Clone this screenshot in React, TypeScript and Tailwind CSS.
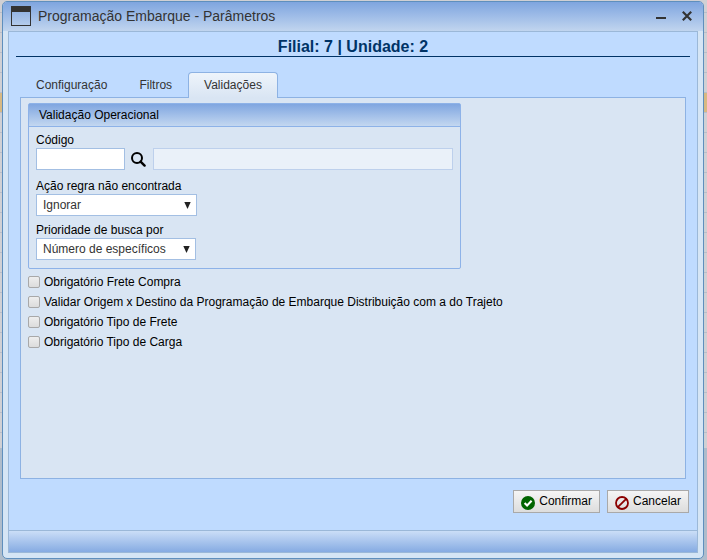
import { useState } from "react"
import clsx from "clsx"

const tabs = ["Configuração", "Filtros", "Validações"]

const checks = [
  "Obrigatório Frete Compra",
  "Validar Origem x Destino da Programação de Embarque Distribuição com a do Trajeto",
  "Obrigatório Tipo de Frete",
  "Obrigatório Tipo de Carga",
]

type SelectFieldProps = {
  id: string
  label: string
  options: string[]
  className: string
}

function SelectField({ id, label, options, className }: SelectFieldProps) {
  return (
    <div className="flex flex-col items-start">
      <label htmlFor={id} className="leading-4">
        {label}
      </label>
      <div className={clsx("relative", className)}>
        <select
          id={id}
          className="h-[22px] w-full appearance-none border border-[#a3bfe3] bg-white pl-1.5 pr-5 text-[#333]"
        >
          {options.map(option => (
            <option key={option}>{option}</option>
          ))}
        </select>
        <svg viewBox="0 0 7 7" className="pointer-events-none absolute right-1.5 top-2 h-[7px] w-[7px]" fill="#222">
          <path d="M.3 0h6.4L3.5 7z" />
        </svg>
      </div>
    </div>
  )
}

function TitleBar() {
  return (
    <header className="flex h-[29px] shrink-0 items-center rounded-t bg-linear-to-b from-[#7fa5df] to-[#c1d5ef] pb-0.5 pl-2 pr-2.5 text-[#333]">
      <svg viewBox="0 0 20 20" className="mr-[7px] h-5 w-5">
        <path fill="#333" fillRule="evenodd" d="M0 0h20v20H0zM1 6v13h18V6z" />
      </svg>
      <h1 className="flex-1 text-sm">Programação Embarque - Parâmetros</h1>
      <button type="button" aria-label="Minimizar" className="mr-4">
        <svg viewBox="0 0 10 10" className="h-2.5 w-2.5">
          <path d="M0 6h10v2H0z" fill="#333" />
        </svg>
      </button>
      <button type="button" aria-label="Fechar" className="mr-px">
        <svg viewBox="0 0 10 10" className="h-2.5 w-2.5">
          <path d="M.8.8l8.4 8.4M9.2.8L.8 9.2" stroke="#333" strokeWidth="2.2" />
        </svg>
      </button>
    </header>
  )
}

function OperationalValidation() {
  return (
    <section className="max-w-[433px] rounded-xs border border-[#8db2e8]">
      <h3 className="border-b border-[#8db2e8] bg-linear-to-b from-[#80a6e0] to-[#c3d7f0] px-2.5 pt-px leading-[21px]">
        Validação Operacional
      </h3>
      <div className="flex flex-col gap-1.5 px-[7px] pb-2 pt-[5px]">
        <div className="mb-0.5">
          <label htmlFor="codigo" className="block leading-4">
            Código
          </label>
          <div className="flex items-center">
            <input id="codigo" type="text" className="h-[22px] w-[89px] border border-[#a3bfe3] bg-white px-1.5" />
            <button type="button" aria-label="Pesquisar" className="mx-1.5">
              <svg viewBox="0 0 16 16" className="h-4 w-4" fill="none" stroke="#000">
                <circle cx="6" cy="7" r="5" strokeWidth="2" />
                <path d="M9.6 10.6l4 4" strokeWidth="2.4" strokeLinecap="round" />
              </svg>
            </button>
            <input
              type="text"
              disabled
              aria-label="Descrição"
              className="h-[22px] min-w-0 flex-1 border border-[#bdd0ec] bg-[#eaf1f9]"
            />
          </div>
        </div>
        <SelectField
          id="acao"
          label="Ação regra não encontrada"
          options={["Ignorar"]}
          className="w-[161px]"
        />
        <SelectField
          id="prioridade"
          label="Prioridade de busca por"
          options={["Número de específicos"]}
          className="w-40"
        />
      </div>
    </section>
  )
}

function Actions() {
  const button =
    "flex h-[23px] items-center border border-[#a9a9a9] bg-linear-to-b from-[#f5f5f5] to-[#dddddd] px-[7px] pb-0.5 text-black"

  return (
    <div className="flex justify-end gap-[7px] pb-[17px] pr-2 pt-[11px]">
      <button type="button" className={button}>
        <svg viewBox="0 0 14 14" className="mr-1 mt-1 h-3.5 w-3.5">
          <circle cx="7" cy="7" r="7" fill="#006400" />
          <path d="M3.6 6.9l2.5 2.5 4.5-4.6" fill="none" stroke="#fff" strokeWidth="2.1" />
        </svg>
        Confirmar
      </button>
      <button type="button" className={button}>
        <svg viewBox="0 0 14 14" className="mr-1 mt-1 h-3.5 w-3.5" fill="none" stroke="#8b0000" strokeWidth="1.8">
          <circle cx="7" cy="7" r="6" />
          <path d="M2.8 11.2l8.4-8.4" />
        </svg>
        Cancelar
      </button>
    </div>
  )
}

export default function App() {
  const [active, setActive] = useState(2)

  return (
    <div className="flex min-h-screen flex-col bg-[linear-gradient(transparent_93px,#d8b983_93px,#d8b983_112px,transparent_112px,transparent_448px,#aebccb_448px),repeating-linear-gradient(#d0d0d4_0,#d0d0d4_12px,#b9bdc8_12px,#b9bdc8_13px,#d0d0d4_13px,#d0d0d4_20px)] pb-px pl-0.5 pr-[3px] pt-px font-['Liberation_Sans',Arial,sans-serif] text-xs text-black">
      <div className="flex flex-1 flex-col rounded-[5px] border border-[#5f8fbd] bg-[#d5e5f5]">
        <TitleBar />
        <main className="mx-[5px] mb-[5px] flex flex-1 flex-col border border-[#9bb8d8] bg-[#bfdbff]">
          <h2 className="mx-[7px] border-b border-[#003366] pt-1.5 text-center text-base font-bold leading-[18px] text-[#003366]">
            Filial: 7 | Unidade: 2
          </h2>
          <div role="tablist" className="relative -mb-px mt-[15px] flex pl-[11px] text-[#333]">
            {tabs.map((tab, index) => (
              <button
                key={tab}
                type="button"
                role="tab"
                aria-selected={index === active}
                onClick={() => setActive(index)}
                className={clsx(
                  "h-[26px] rounded-t border border-b-0 px-[15px] pb-0.5",
                  index === active
                    ? "border-[#8db2e3] bg-linear-to-b from-[#eef4fb] to-[#d9e5f3]"
                    : "border-transparent",
                )}
              >
                {tab}
              </button>
            ))}
          </div>
          <div role="tabpanel" className="mx-[11px] flex-1 border border-[#8db2e3] bg-[#d9e5f3] px-[7px] pt-[5px]">
            <OperationalValidation />
            <div className="mt-[3px]">
              {checks.map(check => (
                <label key={check} className="flex h-5 items-center">
                  <input
                    type="checkbox"
                    className="mr-1 h-3 w-3 shrink-0 appearance-none rounded-xs border border-[#a8a8a8] bg-linear-to-b from-[#eeeeee] to-[#dcdcdc] checked:bg-[#4a7fc8]"
                  />
                  {check}
                </label>
              ))}
            </div>
          </div>
          <Actions />
          <footer className="h-[22px] border-t border-[#9bb8d8] bg-linear-to-b from-[#cbdef7] to-[#86abe2]" />
        </main>
      </div>
    </div>
  )
}
